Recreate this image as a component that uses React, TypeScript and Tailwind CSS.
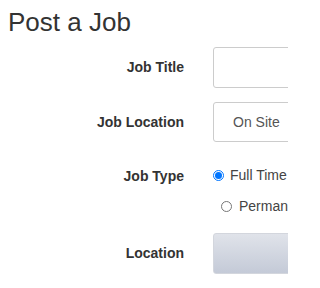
export default function App() {
  return (
    <div className="h-[288px] w-[288px] overflow-hidden bg-white pl-2 font-['Liberation_Sans',Arial,sans-serif] text-[#333]">
      <h1 className="pt-[7px] text-[26px] leading-[30px] font-normal">Post a Job</h1>

      <div className="-ml-2 mt-[10px]">
        <div className="flex items-center">
          <label className="w-[184px] shrink-0 text-right text-[14px] font-bold">Job Title</label>
          <div className="ml-[29px] h-[41px] w-[300px] shrink-0 rounded-[3px] border border-[#ccc] bg-white" />
        </div>

        <div className="mt-[14px] flex items-center">
          <label className="w-[184px] shrink-0 text-right text-[14px] font-bold">Job Location</label>
          <div className="ml-[29px] flex h-[40px] w-[300px] shrink-0 items-center rounded-[3px] border border-[#ccc] bg-white pl-[19px] text-[14px] text-[#555]">
            On Site
          </div>
        </div>

        <div className="mt-[23px] flex h-[20px] items-center">
          <label className="w-[184px] shrink-0 pt-[2px] text-right text-[14px] font-bold">Job Type</label>
          <div className="ml-[29px] flex shrink-0 items-center whitespace-nowrap">
            <span className="flex h-[11px] w-[11px] items-center justify-center rounded-full border border-[#0075ff] bg-white">
              <span className="h-[7px] w-[7px] rounded-full bg-[#0075ff]" />
            </span>
            <span className="ml-[6px] text-[14px] text-[#444]">Full Time</span>
          </div>
        </div>

        <div className="mt-[11px] flex h-[20px] items-center">
          <div className="w-[184px] shrink-0" />
          <div className="ml-[37px] flex shrink-0 items-center whitespace-nowrap">
            <span className="h-[11px] w-[11px] rounded-full border border-[#767676] bg-white" />
            <span className="ml-[7px] text-[14px] text-[#444]">Permanent</span>
          </div>
        </div>

        <div className="mt-[17px] flex items-center">
          <label className="w-[184px] shrink-0 text-right text-[14px] font-bold">Location</label>
          <div className="ml-[29px] h-[41px] w-[300px] shrink-0 rounded-[3px] border border-[#d3d6dd] bg-gradient-to-b from-[#e0e3ea] to-[#c4cad7]" />
        </div>

        <div className="mt-[14px] flex items-center">
          <div className="w-[184px] shrink-0" />
          <div className="ml-[29px] h-[40px] w-[300px] shrink-0 rounded-[3px] border border-[#ccc] bg-white" />
        </div>
      </div>
    </div>
  );
}
